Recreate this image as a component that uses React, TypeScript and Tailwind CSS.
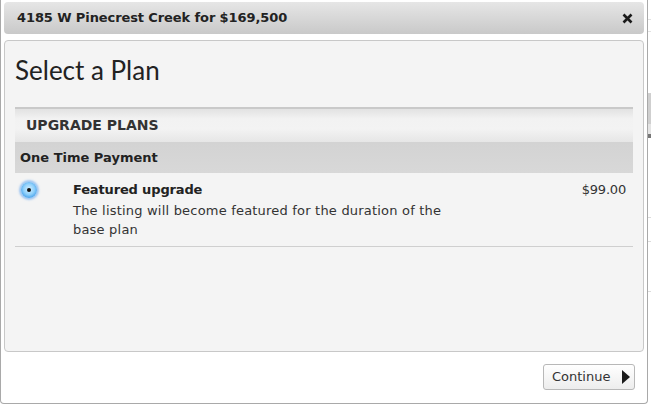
import React from "react";

function CloseIcon() {
  return (
    <svg width="11" height="11" viewBox="0 0 11 11">
      <path d="M1.5 1.5 L9.5 9.5 M9.5 1.5 L1.5 9.5" stroke="#1a1a1a" strokeWidth="2.6" strokeLinecap="butt" />
    </svg>
  );
}

function Radio() {
  return (
    <div className="w-[16px] h-[16px] rounded-full flex items-center justify-center bg-[radial-gradient(circle_at_50%_45%,#d6f0ff_0%,#8fd0fb_45%,#3d9be9_80%,#2a86dc_100%)] shadow-[0_0_2px_2px_rgba(90,160,240,0.55)]">
      <div className="w-[4px] h-[4px] rounded-full bg-[#111]" />
    </div>
  );
}

export default function App() {
  return (
    <div className="w-[651px] h-[405px] overflow-hidden bg-white flex" style={{ fontFamily: '"DejaVu Sans", Verdana, sans-serif' }}>
      <div className="w-[648px] h-[404px] shrink-0 border-l border-r border-b border-[#a9a9a9] rounded-b-[4px] bg-white flex flex-col px-[3px] pt-[2px]">
        <div className="h-[32px] shrink-0 rounded-[4px] bg-gradient-to-b from-[#e6e6e6] to-[#c9c9c9] flex items-center justify-between pl-[13px] pr-[11px]">
          <span className="text-[13px] font-bold text-[#222] tracking-[-0.1px]">4185 W Pinecrest Creek for $169,500</span>
          <CloseIcon />
        </div>
        <div className="mt-[6px] h-[312px] shrink-0 border border-[#c8c8c8] rounded-[4px] bg-[#f4f4f4] px-[10px] pt-[14px]">
          <h1 className="text-[26px] leading-[30px] text-[#222]" style={{ fontFamily: 'Lato, "Open Sans", sans-serif' }}>Select a Plan</h1>
          <div className="mt-[22px] border-t-2 border-[#c9c9c9]">
            <div className="h-[33px] flex items-center pl-[11px] bg-[linear-gradient(to_bottom,#e2e2e2_0%,#f2f2f2_30%,#f3f3f3_60%,#e6e6e6_100%)] text-[14px] font-bold text-[#333]">
              UPGRADE PLANS
            </div>
            <div className="h-[31px] flex items-center pl-[5px] bg-[linear-gradient(to_bottom,#d3d3d3,#d8d8d8)] text-[13px] font-bold text-[#222]">
              One Time Payment
            </div>
            <div className="flex pt-[7px] pb-[7px] border-b border-[#cfcfcf]">
              <div className="w-[58px] shrink-0 pl-[6px] pt-[2px]">
                <Radio />
              </div>
              <div className="w-[385px] text-[13px] leading-[19px] text-[#333]">
                <div className="font-bold text-[#222] tracking-[-0.15px]">Featured upgrade</div>
                <div className="pt-[2px] tracking-[0.2px]">The listing will become featured for the duration of the base plan</div>
              </div>
              <div className="flex-1 text-right pr-[7px] text-[13px] leading-[19px] text-[#333] tracking-[-0.2px]">$99.00</div>
            </div>
          </div>
        </div>
        <div className="flex justify-end pt-[12px] pr-[9px]">
          <button className="w-[92px] h-[26px] border border-[#b8b8b8] rounded-[3px] bg-gradient-to-b from-[#ffffff] to-[#ededed] flex items-center justify-between pl-[8px] pr-[4px] text-[13px] text-[#333]">
            <span>Continue</span>
            <svg width="9" height="14" viewBox="0 0 9 14">
              <path d="M1 0 L9 7 L1 14 Z" fill="#1a1a1a" />
            </svg>
          </button>
        </div>
      </div>
      <div className="flex-1 flex flex-col bg-white">
        <div className="h-[20px] border-b border-[#e2e2e2]" />
        <div className="h-[12px] border-b border-[#e2e2e2]" />
        <div className="h-[62px] border-b border-[#d0d0d0]" />
        <div className="h-[30px] bg-[#cfcfcf]" />
        <div className="h-[10px] bg-[#e4e4e4]" />
        <div className="h-[4px] bg-[#777]" />
        <div className="h-[80px] border-b border-[#dcdcdc]" />
        <div className="h-[24px] border-b border-[#dcdcdc]" />
        <div className="h-[50px] border-b border-[#dcdcdc]" />
        <div className="flex-1" />
      </div>
    </div>
  );
}
